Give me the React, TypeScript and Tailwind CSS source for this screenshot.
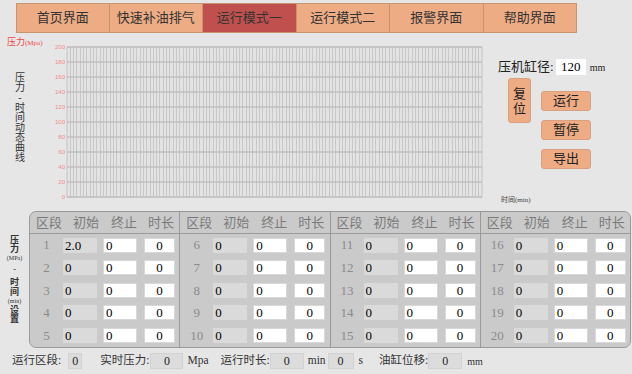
import React from "react";

const tabs = ["首页界面", "快速补油排气", "运行模式一", "运行模式二", "报警界面", "帮助界面"];
const groups = [0, 1, 2, 3];
const rows = [0, 1, 2, 3, 4];

function Chart() {
  const left = 27;
  const top = 14;
  const w = 415;
  const h = 150;
  const n = 125;
  const v = Array.from({ length: n - 1 }, (_, i) => left + ((i + 1) * w) / n);
  const hs = Array.from({ length: 11 }, (_, i) => top + i * 15);
  const labels = [200, 180, 160, 140, 120, 100, 80, 60, 40, 20, 0];
  return (
    <svg width={455} height={175} className="shrink-0">
      <rect x={left} y={top} width={w} height={h} fill="#e3e3e3" stroke="#c4c4c4" strokeWidth={1} />
      {v.map((x, i) => (
        <line key={i} x1={x} y1={top} x2={x} y2={top + h} stroke="#c8c8c8" strokeWidth={1} shapeRendering="crispEdges" />
      ))}
      {hs.map((y, i) => (
        <line key={i} x1={left} y1={y} x2={left + w} y2={y} stroke="#c0c0c0" strokeWidth={1.5} />
      ))}
      {labels.map((l, i) => (
        <text key={l} x={25} y={top + i * 15 + 2} fontSize={6} fill="#f08a8a" textAnchor="end" fontFamily="Liberation Sans, sans-serif">
          {l}
        </text>
      ))}
    </svg>
  );
}

function Field({ value, kind }: { value: string; kind: "gray" | "white" | "center" }) {
  if (kind === "gray") {
    return <div className="h-[15px] w-[34px] bg-[#dadada] pl-[2px] text-[13px] leading-[15px] text-black">{value}</div>;
  }
  if (kind === "white") {
    return <div className="h-[15px] w-[34px] bg-white border border-[#d8d8d8] pl-[2px] text-[13px] leading-[13px] text-black">{value}</div>;
  }
  return <div className="h-[15px] w-[31px] bg-white border border-[#d8d8d8] text-center text-[13px] leading-[13px] text-black">{value}</div>;
}

function Group({ g }: { g: number }) {
  return (
    <div className={`flex-1 flex flex-col ${g > 0 ? "border-l border-[#9a9a9a]" : ""}`}>
      <div className="h-[22px] flex items-center border-b border-[#9a9a9a] text-[13px] text-[#7a7a7a] whitespace-nowrap">
        <span className="ml-[6px]">区段</span>
        <span className="ml-[11px]">初始</span>
        <span className="ml-[12px]">终止</span>
        <span className="ml-[11px]">时长</span>
      </div>
      {rows.map((r) => {
        const idx = g * 5 + r + 1;
        return (
          <div key={r} className="h-[23px] flex items-center">
            <div className="w-[33px] text-center text-[13px] text-[#8a8a8a]">{idx}</div>
            <Field value={idx === 1 ? "2.0" : "0"} kind="gray" />
            <div className="ml-[6px]">
              <Field value="0" kind="white" />
            </div>
            <div className="ml-[7px]">
              <Field value="0" kind="center" />
            </div>
          </div>
        );
      })}
    </div>
  );
}

function StatBox({ w, v }: { w: string; v: string }) {
  return (
    <div className={`${w} shrink-0 h-[16px] bg-[#dcdcdc] border border-[#d2d2d2] text-center text-[12px] leading-[14px] text-[#222]`}>{v}</div>
  );
}

export default function App() {
  const vertical = ["压", "力", "-", "时", "间", "动", "态", "曲", "线"];
  return (
    <div className="w-[632px] h-[374px] bg-[#e6e6e6] overflow-hidden font-['Liberation_Serif','Noto_Sans_CJK_SC',serif] text-[#333]">
      {/* Nav */}
      <div className="flex pl-[16px] pt-[3px]">
        {tabs.map((t, i) => (
          <div
            key={t}
            className={`w-[93.5px] h-[30px] flex items-center justify-center text-[13px] text-[#333] border-r border-y border-[#c8946f] first:border-l ${
              i === 2 ? "bg-[#c0504d]" : "bg-[#eeac84]"
            }`}
          >
            {t}
          </div>
        ))}
      </div>

      {/* Chart + controls */}
      <div className="flex h-[175px]">
        <div className="w-[40px] shrink-0 flex flex-col">
          <div className="mt-[4px] pl-[7px] text-[9px] leading-[10px] text-[#f04848] whitespace-nowrap">
            压力<span className="text-[7px]">(Mpa)</span>
          </div>
          <div className="mt-[25px] flex flex-col items-center text-[10px] text-[#333]">
            {vertical.map((c, i) => (
              <span key={i} className="block h-[10px] leading-[10px]">
                {c}
              </span>
            ))}
          </div>
        </div>
        <Chart />
        <div className="w-[137px] shrink-0 flex flex-col">
          <div className="mt-[26px] h-[16px] flex items-center pl-[3px] whitespace-nowrap">
            <span className="text-[13px] text-[#222]">压机缸径:</span>
            <div className="ml-[2px] w-[30px] h-[16px] bg-white text-center text-[13px] leading-[16px] text-black">120</div>
            <span className="ml-[4px] text-[10px] text-[#222]">mm</span>
          </div>
          <div className="flex mt-[3px]">
            <div className="ml-[13px] w-[23px] h-[45px] bg-[#eeac84] border border-[#d9a080] rounded-[3px] flex flex-col items-center justify-center text-[13px] leading-[15px] text-[#222]">
              <span>复</span>
              <span>位</span>
            </div>
            <div className="ml-[10px] mt-[13px] flex flex-col gap-[9px]">
              {["运行", "暂停", "导出"].map((b) => (
                <div key={b} className="w-[50px] h-[20px] bg-[#eeac84] border border-[#d9a080] rounded-[3px] flex items-center justify-center text-[13px] text-[#222]">
                  {b}
                </div>
              ))}
            </div>
          </div>
          <div className="mt-auto mb-[4px] pl-[6px] text-[7px] leading-[8px] text-[#444]">时间(min)</div>
        </div>
      </div>

      {/* Table */}
      <div className="flex mt-[3px]">
        <div className="w-[29px] shrink-0 flex flex-col items-center justify-center font-bold text-[#333]">
          <span className="block text-[9px] h-[9px] leading-[9px]">压</span>
          <span className="block text-[9px] h-[9px] leading-[9px]">力</span>
          <span className="block text-[6px] h-[8px] leading-[8px] font-normal">(MPa)</span>
          <span className="block text-[8px] h-[10px] leading-[10px] my-[3px]">-</span>
          <span className="block text-[9px] h-[9px] leading-[9px]">时</span>
          <span className="block text-[9px] h-[10px] leading-[10px]">间</span>
          <span className="block text-[6px] h-[9px] leading-[9px] font-normal">(min)</span>
          <span className="block text-[9px] h-[9px] leading-[9px]">设</span>
          <span className="block text-[9px] h-[9px] leading-[9px]">置</span>
        </div>
        <div className="w-[602px] h-[137px] bg-[#cacaca] border border-[#9a9a9a] rounded-[7px] flex overflow-hidden">
          {groups.map((g) => (
            <Group key={g} g={g} />
          ))}
        </div>
      </div>

      {/* Status */}
      <div className="flex items-center mt-[5px] h-[16px] text-[11.5px] text-[#333] whitespace-nowrap">
        <span className="ml-[12px] shrink-0">运行区段:</span>
        <div className="ml-[7px]">
          <StatBox w="w-[14px]" v="0" />
        </div>
        <span className="ml-[18px] shrink-0">实时压力:</span>
        <div className="ml-[1px]">
          <StatBox w="w-[33px]" v="0" />
        </div>
        <span className="ml-[4px] shrink-0">Mpa</span>
        <span className="ml-[12px] shrink-0">运行时长:</span>
        <StatBox w="w-[34px]" v="0" />
        <span className="ml-[4px] shrink-0">min</span>
        <div className="ml-[2px]">
          <StatBox w="w-[26px]" v="0" />
        </div>
        <span className="ml-[5px] shrink-0">s</span>
        <span className="ml-[16px] shrink-0">油缸位移:</span>
        <StatBox w="w-[34px]" v="0" />
        <span className="ml-[5px] text-[10px] shrink-0">mm</span>
      </div>
    </div>
  );
}
